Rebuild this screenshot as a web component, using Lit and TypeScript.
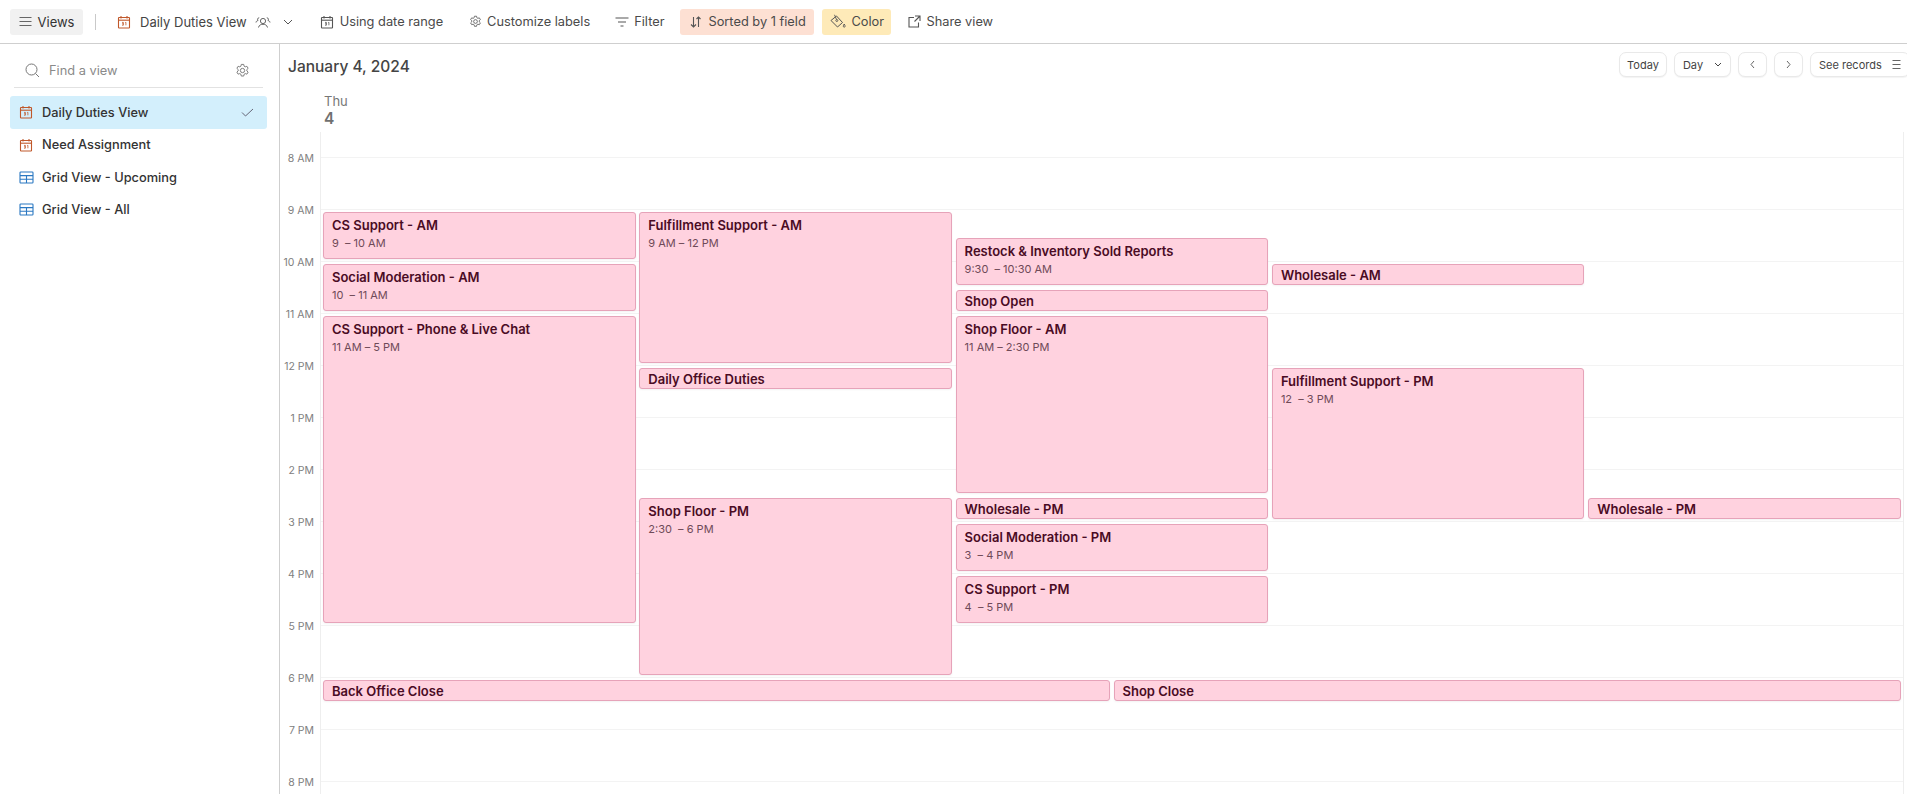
import { LitElement, html, css, svg } from "lit";
import { customElement } from "lit/decorators.js";

const HOUR = 52;
const FIRST_LINE = 25; // distance from the top of the grid body to the 8 AM line
const COL_LEFT = 2;
const COL_PITCH = 316.3;
const COL_W = 312.5;

interface Ev { t: string; s: string; start: number; end: number; col: number; left?: number; width?: number }
const events: Ev[] = [
  { t: "CS Support - AM", s: "9  – 10 AM", start: 9, end: 10, col: 0 },
  { t: "Social Moderation - AM", s: "10  – 11 AM", start: 10, end: 11, col: 0 },
  { t: "CS Support - Phone & Live Chat", s: "11 AM – 5 PM", start: 11, end: 17, col: 0 },
  { t: "Fulfillment Support - AM", s: "9 AM – 12 PM", start: 9, end: 12, col: 1 },
  { t: "Daily Office Duties", s: "", start: 12, end: 12.5, col: 1 },
  { t: "Shop Floor - PM", s: "2:30  – 6 PM", start: 14.5, end: 18, col: 1 },
  { t: "Restock & Inventory Sold Reports", s: "9:30  – 10:30 AM", start: 9.5, end: 10.5, col: 2 },
  { t: "Shop Open", s: "", start: 10.5, end: 11, col: 2 },
  { t: "Shop Floor - AM", s: "11 AM – 2:30 PM", start: 11, end: 14.5, col: 2 },
  { t: "Wholesale - PM", s: "", start: 14.5, end: 15, col: 2 },
  { t: "Social Moderation - PM", s: "3  – 4 PM", start: 15, end: 16, col: 2 },
  { t: "CS Support - PM", s: "4  – 5 PM", start: 16, end: 17, col: 2 },
  { t: "Wholesale - AM", s: "", start: 10, end: 10.5, col: 3 },
  { t: "Fulfillment Support - PM", s: "12  – 3 PM", start: 12, end: 15, col: 3 },
  { t: "Wholesale - PM", s: "", start: 14.5, end: 15, col: 4 },
  { t: "Back Office Close", s: "", start: 18, end: 18.5, col: 0, left: 2, width: 787 },
  { t: "Shop Close", s: "", start: 18, end: 18.5, col: 0, left: 792.5, width: 787.5 },
];
const hours = ["8 AM","9 AM","10 AM","11 AM","12 PM","1 PM","2 PM","3 PM","4 PM","5 PM","6 PM","7 PM","8 PM"];

const ic = (w: number, h: number, body: unknown, cls = "") => html`<svg class="ic ${cls}" width=${w} height=${h} viewBox="0 0 ${w} ${h}" fill="none">${body}</svg>`;

const calIcon = (cls = "") => ic(14, 14, svg`
  <rect x="1.5" y="2.5" width="11" height="10.5" rx="0.6" stroke="currentColor" stroke-width="1.1"/>
  <path d="M1.5 5.2H12.5" stroke="currentColor" stroke-width="1.1"/>
  <path d="M4 1V3.4M10 1V3.4" stroke="currentColor" stroke-width="1.1"/>
  <path d="M5 7.4H6.4V10.2M5 8.8H6.2M5 10.2H6.4M8.2 7.6L8.9 7.3V10.3" stroke="currentColor" stroke-width="0.8"/>`, cls);
const gridIcon = () => ic(15, 13, svg`
  <rect x="1" y="1" width="13" height="11" rx="0.8" stroke="currentColor" stroke-width="1.1"/>
  <path d="M1 4.6H14M1 8.2H14M7.5 4.6V12" stroke="currentColor" stroke-width="1.1"/>`, "blue");
const gear = (s = 14) => html`<svg class="ic" width=${s} height=${s} viewBox="0 0 16 16" fill="none" stroke="currentColor" stroke-width="1"><circle cx="8" cy="8" r="2.3"/><path d="M6.7 1.5h2.6l.4 1.9 1.2.7 1.8-.6 1.3 2.2-1.4 1.3v1.4l1.4 1.3-1.3 2.2-1.8-.6-1.2.7-.4 1.9H6.7l-.4-1.9-1.2-.7-1.8.6L2 9.7l1.4-1.3V7L2 5.7l1.3-2.2 1.8.6 1.2-.7z" stroke-linejoin="round"/></svg>`;
const hamburger = (w = 13, color = "currentColor") => ic(w, 11, svg`<path d="M0.5 1.5H${w - 0.5}M0.5 5.5H${w - 0.5}M0.5 9.5H${w - 0.5}" stroke=${color} stroke-width="1.2"/>`);
const chev = (w = 11, h = 6) => ic(w, h, svg`<path d="M1 1L${w / 2} ${h - 1}L${w - 1} 1" stroke="currentColor" stroke-width="1"/>`);

@customElement("app-root")
export class AppRoot extends LitElement {
  static styles = css`
    :host { display: flex; flex-direction: column; width: 1907px; height: 794px; overflow: hidden; background: #fff;
      font-family: Inter, "Liberation Sans", sans-serif; color: #333; font-size: 13px; }
    .ic { flex: none; display: block; }
    .toolbar { height: 43px; flex: none; display: flex; align-items: center; padding-left: 10px; border-bottom: 1px solid #cfcfcf; box-sizing: content-box; }
    .tb { display: flex; align-items: center; height: 26px; border-radius: 3px; gap: 6px; color: #4a4a4a; white-space: nowrap; font-size: 12.8px; flex: none; }
    .tb > .ic { color: #555; }
    .views { width: 73px; background: #f1f1f1; justify-content: center; color: #333; margin-right: 12px; font-size: 13px; }
    .sep { width: 1px; height: 16px; background: #c9c9c9; margin-right: 21px; flex: none; }
    .dd { color: #444; margin-right: 27px; font-size: 13px; }
    .dd .cal { color: #c0582a; margin-right: 3px; }
    .dd .people { margin: 0 6px 0 2px; color: #555; }
    .date { margin-right: 26px; }
    .custom { margin-right: 25px; gap: 5px; }
    .filter { margin-right: 16px; gap: 5px; }
    .sort { background: #fde0d3; padding: 0 10px; margin-right: 8px; width: 134px; box-sizing: border-box; }
    .color { background: #feeab8; padding: 0 8px; margin-right: 17px; width: 69px; box-sizing: border-box; gap: 5px; }
    .share { gap: 5px; }
    .body { flex: 1; display: flex; min-height: 0; }
    .side { width: 280px; flex: none; border-right: 1px solid #cfcfcf; padding: 9px 12px 0 10px; box-sizing: border-box; }
    .find { margin: 0 4px; height: 34px; border-bottom: 1px solid #e2e2e2; display: flex; align-items: center; padding: 0 13px 0 11px; color: #8a8a8a; gap: 9px; box-sizing: content-box; }
    .find span { flex: 1; font-size: 12.8px; }
    .find .ic { color: #777; }
    .views-list { margin-top: 8px; display: flex; flex-direction: column; }
    .vi { height: 32.5px; display: flex; align-items: center; padding: 0 13px 0 9px; border-radius: 3px; gap: 9px; color: #333; font-size: 12.8px; font-weight: 500; }
    .vi span { flex: 1; }
    .vi span.fix { flex: none; }
    .vi.on { background: #d3effc; }
    .vi .cal { color: #c0582a; }
    .vi .blue { color: #2b78c2; margin-right: -1px; }
    .vi .check { color: #667; }
    .main { flex: 1; min-width: 0; display: flex; flex-direction: column; overflow: hidden; }
    .head { height: 36px; flex: none; display: flex; align-items: flex-end; justify-content: space-between; padding-left: 8px; }
    .title { font-size: 15.5px; font-weight: 500; color: #444; line-height: 24px; margin-bottom: 1px; }
    .ctrls { display: flex; gap: 7px; margin-right: -3px; margin-bottom: 3px; }
    .btn { height: 25px; border: 1px solid #e9e9e9; border-radius: 7px; background: #fff; box-shadow: 0 1px 1px rgba(0,0,0,.05); display: flex; align-items: center; justify-content: center; font-size: 11px; color: #444; box-sizing: border-box; gap: 11px; flex: none; }
    .today { width: 48px; } .day { width: 57px; } .nav { width: 29px; } .nav .ic { color: #666; }
    .see { width: 100px; justify-content: flex-start; padding-left: 8px; gap: 10px; }
    .see .ic { color: #666; }
    .dayhead { height: 39px; flex: none; padding-left: 44px; color: #777; padding-top: 13px; box-sizing: content-box; }
    .dayhead .n1 { font-size: 13px; line-height: 16px; }
    .dayhead .n2 { font-size: 15.5px; line-height: 19px; font-weight: 600; color: #707070; }
    .cal-body { display: flex; flex: 1; min-height: 0; }
    .gutter { width: 40px; flex: none; position: relative; }
    .hl { position: absolute; right: 6px; font-size: 10.5px; color: #808080; line-height: 12px; white-space: nowrap; }
    .grid { flex: none; width: 1584px; border-left: 1px solid #eeeeee; border-right: 1px solid #eeeeee; position: relative; box-sizing: border-box; height: 100%; }
    .line { position: absolute; left: 0; right: 0; height: 1px; background: #f3f3f3; }
    .ev { position: absolute; box-sizing: border-box; background: #ffd2df; border: 1px solid #e6a3b9; border-radius: 3px; padding: 3px 8px; overflow: hidden; box-shadow: 0 1px 2px rgba(0,0,0,.05); }
    .ev .t { font-size: 13px; font-weight: 600; color: #4a0b24; line-height: 17px; white-space: nowrap; }
    .ev .s { font-size: 11px; color: #6f4a58; line-height: 15px; margin-top: 2px; white-space: pre; }
    .ev.short { padding-top: 2px; padding-bottom: 0; }
    .ev.timed { padding-top: 4px; }
  `;

  render() {
    const y = (h: number) => (h - 8) * HOUR + FIRST_LINE;
    return html`
      <div class="toolbar">
        <div class="tb views">${hamburger(13, "#666")}Views</div>
        <div class="sep"></div>
        <div class="tb dd">
          <span class="cal">${calIcon()}</span>Daily Duties View
          <span class="people">${ic(16, 12, svg`<circle cx="8" cy="5" r="2.6" stroke="currentColor" stroke-width=".9"/><path d="M3.5 11.5C4 9 6 8.3 8 8.3S12 9 12.5 11.5M1 6.5C1.2 5 2.3 4.7 3 4.6 2.2 3.8 2.5 1.8 4.2 1.7M15 6.5C14.8 5 13.7 4.7 13 4.6 13.8 3.8 13.5 1.8 11.8 1.7" stroke="currentColor" stroke-width=".9"/>`)}</span>
          ${chev(10, 6)}
        </div>
        <div class="tb date">${calIcon()}Using date range</div>
        <div class="tb custom">${gear(13)}Customize labels</div>
        <div class="tb filter">${ic(14, 10, svg`<path d="M0.5 1H13.5M3 5H11M5.5 9H8.5" stroke="currentColor" stroke-width="1.2"/>`)}Filter</div>
        <div class="tb sort">${ic(12, 12, svg`<path d="M3.5 1V11M1 8.5L3.5 11 6 8.5M8.5 11V1M6.500 3L8.500 1 10.500 3" stroke="currentColor" stroke-width="1.1"/>`)}Sorted by 1 field</div>
        <div class="tb color">${ic(16, 15, svg`<path d="M1 6.5L6.5 2 12.5 8.5 7.5 13z" stroke="currentColor" stroke-width="1" stroke-linejoin="round"/><circle cx="6.8" cy="6.5" r="1" stroke="currentColor" stroke-width=".9"/><path d="M4.5 .8L6.5 5.5M14.2 10C15.4 11.7 15.4 13.2 14.2 13.2S13 11.7 14.2 10z" stroke="currentColor" stroke-width=".9"/>`)}Color</div>
        <div class="tb share">${ic(13, 13, svg`<path d="M6 2.5H1V12H10.5V7.5M7 1H12V6M12 1L6.5 6.5" stroke="currentColor" stroke-width="1.1"/>`)}Share view</div>
      </div>
      <div class="body">
        <div class="side">
          <div class="find">
            ${ic(15, 15, svg`<circle cx="6.5" cy="6.5" r="5.5" stroke="currentColor" stroke-width="1"/><path d="M10.5 10.5L14 14" stroke="currentColor" stroke-width="1"/>`)}
            <span>Find a view</span>
            ${gear(15)}
          </div>
          <div class="views-list">
            <div class="vi on"><span class="cal fix">${calIcon()}</span><span>Daily Duties View</span><span class="check fix">${ic(13, 9, svg`<path d="M1 4.5L4.5 8 12 1" stroke="currentColor" stroke-width="1"/>`)}</span></div>
            <div class="vi"><span class="cal fix">${calIcon()}</span><span>Need Assignment</span></div>
            <div class="vi">${gridIcon()}<span>Grid View - Upcoming</span></div>
            <div class="vi">${gridIcon()}<span>Grid View - All</span></div>
          </div>
        </div>
        <div class="main">
          <div class="head">
            <div class="title">January 4, 2024</div>
            <div class="ctrls">
              <div class="btn today">Today</div>
              <div class="btn day">Day ${chev(8, 5)}</div>
              <div class="btn nav">${ic(5, 9, svg`<path d="M4 1L1 4.5 4 8" stroke="currentColor" stroke-width="1"/>`)}</div>
              <div class="btn nav">${ic(5, 9, svg`<path d="M1 1L4 4.5 1 8" stroke="currentColor" stroke-width="1"/>`)}</div>
              <div class="btn see">See records ${hamburger(9, "#666")}</div>
            </div>
          </div>
          <div class="dayhead"><div class="n1">Thu</div><div class="n2">4</div></div>
          <div class="cal-body">
            <div class="gutter">
              ${hours.map((h, i) => html`<div class="hl" style="top:${y(8 + i) - 4.5}px">${h}</div>`)}
            </div>
            <div class="grid">
              ${hours.map((_, i) => html`<div class="line" style="top:${y(8 + i)}px"></div>`)}
              ${events.map((e) => {
                const left = e.left ?? COL_LEFT + e.col * COL_PITCH;
                const width = e.width ?? COL_W;
                const top = y(e.start) + 3;
                const height = (e.end - e.start) * HOUR - 5;
                return html`<div class="ev ${e.s ? "timed" : "short"}" style="left:${left}px;top:${top}px;width:${width}px;height:${height}px">
                  <div class="t">${e.t}</div>${e.s ? html`<div class="s">${e.s}</div>` : ""}
                </div>`;
              })}
            </div>
          </div>
        </div>
      </div>
    `;
  }
}
